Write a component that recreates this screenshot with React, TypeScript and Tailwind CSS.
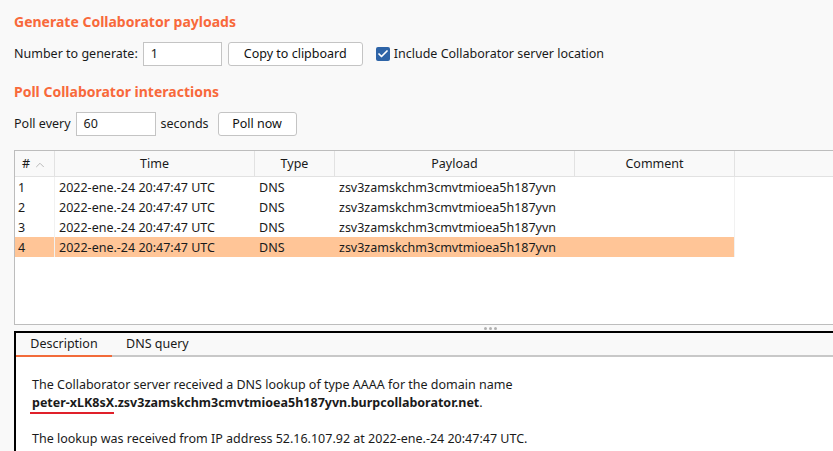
import { Check, ChevronUp } from "lucide-react";

const rows = [1, 2, 3, 4].map((n) => ({
  n,
  time: "2022-ene.-24 20:47:47 UTC",
  type: "DNS",
  payload: "zsv3zamskchm3cmvtmioea5h187yvn",
}));

const cols = [
  { w: "w-[40px]", label: "#" },
  { w: "w-[200px]", label: "Time" },
  { w: "w-[80px]", label: "Type" },
  { w: "w-[240px]", label: "Payload" },
  { w: "w-[160px]", label: "Comment" },
];

function Btn({ children, w }: { children: React.ReactNode; w: string }) {
  return (
    <button className={`${w} h-[24px] rounded-[3px] border border-[#c4c4c4] bg-white text-[12.5px] text-[#111]`}>
      {children}
    </button>
  );
}

export default function App() {
  return (
    <div
      className="w-[833px] h-[451px] overflow-hidden bg-[#f9f9f9] text-[12.5px] text-[#1a1a1a]"
      style={{ fontFamily: "'Noto Sans', 'Open Sans', sans-serif" }}
    >
      <div className="pl-[14px] pt-[11px]">
        <h2 className="text-[14px] font-bold text-[#f8693b] leading-[22px]">Generate Collaborator payloads</h2>
        <div className="mt-[9px] flex items-center h-[24px]">
          <span>Number to generate:</span>
          <div className="ml-[5px] w-[79px] h-[24px] border border-[#c4c4c4] bg-white pl-[7px] leading-[22px]">1</div>
          <div className="ml-[6px]">
            <Btn w="w-[135px]">Copy to clipboard</Btn>
          </div>
          <span className="ml-[13px] w-[14px] h-[14px] rounded-[2px] bg-[#2e64a7] flex items-center justify-center">
            <Check size={12} strokeWidth={3.5} color="white" />
          </span>
          <span className="ml-[4px]">Include Collaborator server location</span>
        </div>
        <h2 className="mt-[15px] text-[14px] font-bold text-[#f8693b] leading-[22px]">Poll Collaborator interactions</h2>
        <div className="mt-[9px] flex items-center h-[24px]">
          <span>Poll every</span>
          <div className="ml-[5px] w-[80px] h-[24px] border border-[#c4c4c4] bg-white pl-[7px] leading-[22px]">60</div>
          <span className="ml-[5px]">seconds</span>
          <div className="ml-[9px]">
            <Btn w="w-[79px]">Poll now</Btn>
          </div>
        </div>
      </div>

      <div className="ml-[14px] mt-[14px] h-[175px] border-t border-l border-b border-[#bdbdbd] bg-white">
        <div className="flex h-[26px] bg-[#f9f9f9] border-b border-[#e2e2e2]">
          {cols.map((c, i) => (
            <div
              key={c.label}
              className={`${c.w} flex items-center justify-center pt-[2px] border-r border-[#e2e2e2] ${i === 0 ? "gap-[3px]" : ""}`}
            >
              <span>{c.label}</span>
              {i === 0 && <ChevronUp size={14} strokeWidth={1.5} color="#b0b0b0" />}
            </div>
          ))}
        </div>
        {rows.map((r) => (
          <div key={r.n} className={`flex h-[20px] w-[720px] items-center ${r.n === 4 ? "bg-[#ffc597]" : ""}`}>
            <div className="w-[40px] pl-[3px] pt-[2px] border-r border-[#f1f1f1] h-full leading-[18px]">{r.n}</div>
            <div className="w-[200px] pl-[4px] pt-[2px] h-full leading-[18px]">{r.time}</div>
            <div className="w-[80px] pl-[4px] pt-[2px] h-full leading-[18px]">{r.type}</div>
            <div className="w-[240px] pl-[4px] pt-[2px] h-full leading-[18px]">{r.payload}</div>
            <div className="w-[160px] h-full border-r border-[#f1f1f1]"></div>
          </div>
        ))}
      </div>

      <div className="h-[6px] flex items-center justify-center gap-[2px] pl-[148px]">
        <span className="w-[3px] h-[3px] rounded-full bg-[#b0b0b0]" />
        <span className="w-[3px] h-[3px] rounded-full bg-[#b0b0b0]" />
        <span className="w-[3px] h-[3px] rounded-full bg-[#b0b0b0]" />
      </div>

      <div className="ml-[14px] border-t-2 border-l-2 border-black bg-white h-[200px]">
        <div className="flex h-[24px] bg-[#f9f9f9] border-b-2 border-[#c8c8c8]">
          <div className="w-[96px] flex items-center justify-center border-b-2 border-[#f26b3a] -mb-[2px]">
            Description
          </div>
          <div className="ml-[14px] flex items-center">DNS query</div>
        </div>
        <div className="pl-[16px] pt-[19px] leading-[18px]">
          <p>The Collaborator server received a DNS lookup of type AAAA for the domain name</p>
          <p>
            <b className="relative">
              peter-xLK8sX
              <span className="absolute left-[-2px] right-0 bottom-[-3px] h-[2px] bg-[#e0202a]" />
            </b>
            <b>.zsv3zamskchm3cmvtmioea5h187yvn.burpcollaborator.net</b>.
          </p>
          <p className="mt-[18px]">
            The lookup was received from IP address 52.16.107.92 at 2022-ene.-24 20:47:47 UTC.
          </p>
        </div>
      </div>
    </div>
  );
}
